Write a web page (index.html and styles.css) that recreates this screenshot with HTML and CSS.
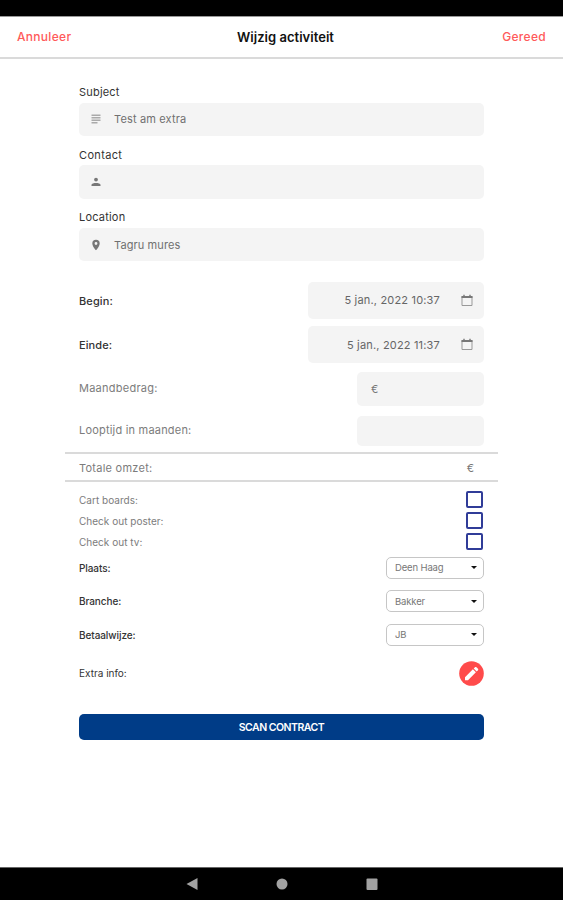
FILE: index.html
```html
<!DOCTYPE html>
<html lang="nl">
<head>
<meta charset="utf-8">
<title>Wijzig activiteit</title>
<link rel="stylesheet" href="styles.css">
</head>
<body>
<div class="status"></div>
<header class="header">
  <span class="action cancel">Annuleer</span>
  <span class="title">Wijzig activiteit</span>
  <span class="action done">Gereed</span>
</header>
<main class="form">
  <div class="label">Subject</div>
  <div class="field">
    <svg class="icon pale" viewBox="0 0 12 12"><path d="M1.500 1.500h9v1.500h-9zM1.500 4h9v1.500h-9zM1.500 6.500h9v1.500h-9zM1.500 9h6v1.500h-6z"/></svg>
    <span class="value">Test am extra</span>
  </div>
  <div class="label wide">Contact</div>
  <div class="field">
    <svg class="icon" viewBox="0 0 12 12"><circle cx="6" cy="3.600" r="1.900"/><path d="M1.500 10V8.800C1.500 7.600 4 7 6 7s4.500.6 4.500 1.800V10z"/></svg>
  </div>
  <div class="label">Location</div>
  <div class="field">
    <svg class="icon" viewBox="0 0 12 12"><path fill-rule="evenodd" d="M6 .8a3.700 3.700 0 0 0-3.700 3.700C2.300 7.300 6 11.300 6 11.300s3.700-4 3.700-6.800A3.700 3.700 0 0 0 6 .8zm0 2.300a1.400 1.400 0 1 1 0 2.800 1.400 1.400 0 0 1 0-2.800z"/></svg>
    <span class="value place">Tagru mures</span>
  </div>

  <div class="row date first">
    <span class="name">Begin:</span>
    <div class="box"><span class="when">5 jan., 2022 10:37</span>
      <svg class="calendar" viewBox="0 0 12 13"><path class="frame" d="M1 2.500h10v9H1z"/><path d="M.5 2h11v2H.5zM2.300.8h1.400v2H2.300zM8.300.8h1.400v2H8.300z"/></svg></div>
  </div>
  <div class="row date">
    <span class="name">Einde:</span>
    <div class="box"><span class="when">5 jan., 2022 11:37</span>
      <svg class="calendar" viewBox="0 0 12 13"><path class="frame" d="M1 2.500h10v9H1z"/><path d="M.5 2h11v2H.5zM2.300.8h1.400v2H2.300zM8.300.8h1.400v2H8.300z"/></svg></div>
  </div>
  <div class="row amount">
    <span class="soft">Maandbedrag:</span>
    <div class="box small">€</div>
  </div>
  <div class="row months">
    <span class="soft">Looptijd in maanden:</span>
    <div class="box small"></div>
  </div>
  <div class="total"><span class="soft">Totale omzet:</span><span class="euro">€</span></div>

  <div class="checks">
    <div class="check"><span>Cart boards:</span><i class="checkbox"></i></div>
    <div class="check"><span>Check out poster:</span><i class="checkbox"></i></div>
    <div class="check"><span>Check out tv:</span><i class="checkbox"></i></div>
  </div>

  <div class="selects">
    <div class="choice"><span class="tag">Plaats:</span><div class="select"><span>Deen Haag</span><i class="caret"></i></div></div>
    <div class="choice"><span class="tag">Branche:</span><div class="select"><span>Bakker</span><i class="caret"></i></div></div>
    <div class="choice"><span class="tag">Betaalwijze:</span><div class="select"><span>JB</span><i class="caret"></i></div></div>
  </div>
  <div class="extra">
    <span class="tag info">Extra info:</span>
    <svg class="edit" viewBox="0 0 25 25"><circle cx="12.500" cy="12.500" r="12.300"/><path d="M6 16.200 13.900 8.300 16.900 11.300 9 19.200H6zM14.700 7.500l1.300-1.300c.4-.4 1-.4 1.400 0l1.600 1.600c.4.4.4 1 0 1.400l-1.300 1.300z"/></svg>
  </div>
  <div class="scan">SCAN CONTRACT</div>
</main>
<nav class="nav">
  <svg viewBox="0 0 12 12"><path d="M11.500 0v12L.5 6z"/></svg>
  <svg viewBox="0 0 12 12"><circle cx="6" cy="6" r="5.500"/></svg>
  <svg viewBox="0 0 12 12"><rect x=".5" y=".5" width="11" height="11.500" rx="1"/></svg>
</nav>
</body>
</html>
```
FILE: styles.css
```css
* { box-sizing: border-box; }
body {
  margin: 0;
  height: 900px;
  display: flex;
  flex-direction: column;
  overflow: hidden;
  background: #fff;
  color: #333;
  font-family: Inter, "Liberation Sans", sans-serif;
  font-size: 11px;
  white-space: nowrap;
}
.status { height: 16px; background: #000; flex: none; }
.header {
  height: 42.500px;
  flex: none;
  display: grid;
  grid-template-columns: 1fr auto 1fr;
  align-items: center;
  padding: 0 17px 1px;
  border-top: 1px solid #999;
  border-bottom: 2px solid #dadada;
}
.action { color: #ff5a5a; font-size: 12px; font-weight: 500; letter-spacing: .3px; }
.done { text-align: right; }
.title { color: #111; font-size: 13px; font-weight: 600; letter-spacing: .03px; padding: 2px 0 0 8px; }
.form { width: 405px; margin-left: 79px; padding-top: 24.500px; flex: 1; }
.label { height: 19.500px; line-height: 19px; color: #333; letter-spacing: .2px; }
.wide { letter-spacing: .35px; }
.field {
  height: 33.500px;
  margin-bottom: 9.700px;
  padding-left: 11px;
  display: flex;
  align-items: center;
  gap: 12px;
  background: #f4f4f4;
  border-radius: 5px;
}
.icon { width: 12px; height: 12px; fill: #777; }
.pale { fill: #aaa; }
.value { color: #707070; letter-spacing: .15px; }
.place { letter-spacing: .1px; }
.row { display: flex; justify-content: space-between; align-items: center; }
.name { color: #333; font-weight: 500; letter-spacing: .1px; margin-top: 1px; }
.box { background: #f4f4f4; border-radius: 5px; height: 36.500px; width: 176px; display: flex; align-items: center; justify-content: flex-end; padding-right: 11px; }
.date { height: 36.500px; margin-bottom: 7.800px; }
.first { margin-top: 20.800px; }
.when { color: #666; letter-spacing: .18px; }
.calendar { width: 12px; height: 13px; margin-left: 21px; fill: #777; }
.frame { fill: none; stroke: #999; stroke-width: 1; }
.small { width: 127px; height: 34px; justify-content: flex-start; padding-left: 14px; color: #777; }
.soft { color: #7c7c7c; letter-spacing: .25px; }
.amount { height: 34px; margin-top: 9.500px; }
.amount .soft { margin-top: -3px; }
.months { height: 30px; margin-top: 9.500px; }
.months .small { height: 30px; }
.months .soft { margin-top: -1px; letter-spacing: .2px; }
.total {
  height: 30px;
  margin: 6px -14px 0;
  padding: 2px 24px 0 14px;
  display: flex;
  justify-content: space-between;
  align-items: center;
  border: solid #dadada;
  border-width: 2px 0;
}
.euro { color: #777; }
.checks { padding-top: 7px; }
.check { height: 21.200px; display: flex; justify-content: space-between; align-items: center; font-size: 10px; color: #7c7c7c; letter-spacing: .02px; }
.checkbox { width: 17px; height: 17px; margin-right: 1px; border: 2px solid #303c98; border-radius: 2px; }
.selects { padding-top: 4px; }
.choice { height: 22px; margin-bottom: 11.700px; display: flex; justify-content: space-between; align-items: center; }
.tag { color: #333; font-size: 10px; font-weight: 500; letter-spacing: -.08px; }
.select { width: 98px; height: 22px; padding: 0 6px 0 8px; display: flex; align-items: center; justify-content: space-between; border: 1px solid #c6c6c6; border-radius: 5px; color: #777; font-size: 9.500px; letter-spacing: -.15px; }
.caret { border: 3px solid transparent; border-top: 3.500px solid #111; border-bottom: 0; }
.extra { height: 25px; margin-top: 15px; display: flex; align-items: center; justify-content: space-between; }
.info { font-weight: 400; letter-spacing: 0; }
.edit { width: 25px; height: 25px; }
.edit circle { fill: #ff4b4b; }
.edit path { fill: #fff; }
.scan { height: 25.500px; margin-top: 28.300px; border-radius: 5px; background: #003c87; color: #fff; font-size: 10.500px; font-weight: 600; line-height: 27px; text-align: center; letter-spacing: -.5px; }
.nav { height: 33px; flex: none; background: #000; display: flex; justify-content: center; align-items: center; gap: 78px; border-top: 1px solid #666; }
.nav svg { width: 12px; height: 12px; fill: #a2a2a2; }
```
